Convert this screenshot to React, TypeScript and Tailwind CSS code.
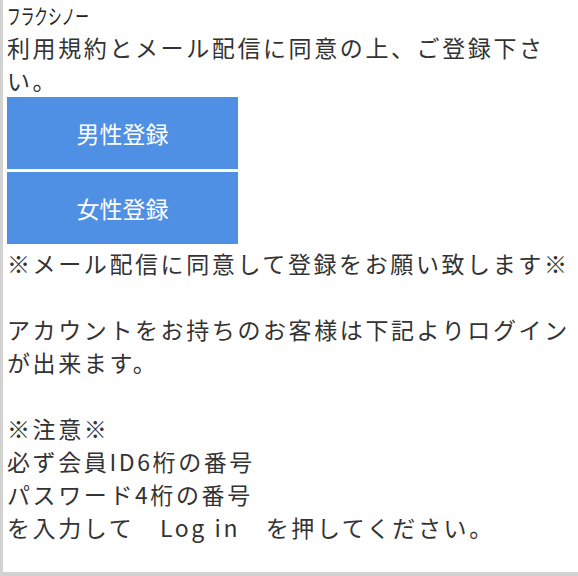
export default function App() {
  const font = { fontFamily: '"Noto Sans CJK JP", "Noto Sans", sans-serif' }
  return (
    <div
      className="h-[576px] w-[578px] overflow-hidden bg-white border-l-[3px] border-b-[4px] border-[#d2d2d2] text-[#333] pl-1"
      style={font}
    >
      {/* Site name */}
      <div className="h-[31px] flex items-center">
        <span className="inline-block origin-left scale-x-[0.65] text-[21px] leading-none text-[#222]">フラクシノー</span>
      </div>

      <p className="text-[23px] leading-[33px] tracking-[2.6px]">
        利用規約とメール配信に同意の上、ご登録下さい。
      </p>

      {/* Register buttons */}
      <div className="flex flex-col gap-[3px] w-[231px]">
        <button className="h-[72px] bg-[#4f8fe4] text-white text-[23px]">男性登録</button>
        <button className="h-[72px] bg-[#4f8fe4] text-white text-[23px]">女性登録</button>
      </div>

      <div className="mt-[3px] text-[23px] leading-[33px] tracking-[2.6px]">
        <p>※メール配信に同意して登録をお願い致します※</p>
        <p>&nbsp;</p>
        <p>アカウントをお持ちのお客様は下記よりログインが出来ます。</p>
        <p>&nbsp;</p>
        <p>※注意※</p>
        <p>必ず会員ID6桁の番号</p>
        <p>パスワード4桁の番号</p>
        <p>を入力して　Log in　を押してください。</p>
      </div>
    </div>
  )
}
